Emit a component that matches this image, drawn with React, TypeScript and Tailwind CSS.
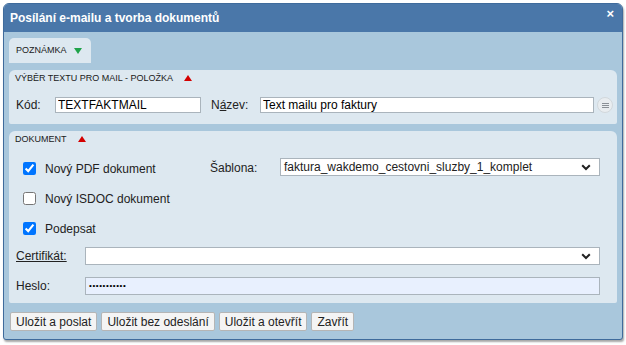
import React from "react";

const font = { fontFamily: '"Liberation Sans", Arial, sans-serif' };

const Chevron = () => (
  <svg width="10" height="7" viewBox="0 0 10 7" className="pointer-events-none">
    <path d="M1.2 1.2 L5 5 L8.8 1.2" fill="none" stroke="#222" strokeWidth="2" />
  </svg>
);

const SectionHead = ({ title }: { title: string }) => (
  <div className="flex items-center h-[17px] pl-[6px] text-[9px] text-[#1a1a1a] uppercase">
    <span>{title}</span>
    <svg width="8" height="6" viewBox="0 0 8 6" className="ml-[11px] mb-[1px]">
      <path d="M0 6 L4 0 L8 6 Z" fill="#d40000" />
    </svg>
  </div>
);

const App = () => {
  return (
    <div className="w-[626px] h-[345px] bg-white pt-[3px] pl-[3px]" style={font}>
      <div className="w-[620px] h-[337px] flex flex-col rounded-t-[6px] rounded-b-[3px] border border-[#3f6b9c] bg-[#a9c7dc] shadow-[1px_2px_2px_rgba(0,0,0,0.35)] overflow-hidden">
        {/* titulek */}
        <div className="h-[28px] shrink-0 bg-[#4a77a9] flex items-center justify-between pl-[6px] pr-[8px]">
          <span className="text-white font-bold text-[12px]">Posílání e-mailu a tvorba dokumentů</span>
          <span className="text-white text-[13px] font-bold leading-none -mt-[10px]">×</span>
        </div>

        <div className="flex flex-col px-[5px]">
          {/* záložka poznámka */}
          <div className="mt-[6px] w-[82px] h-[25px] rounded-t-[5px] bg-[#dde8f0] flex items-center pl-[7px] text-[9px] text-[#1a1a1a]">
            POZNÁMKA
            <svg width="8" height="6" viewBox="0 0 8 6" className="ml-[7px]">
              <path d="M0 0 L8 0 L4 6 Z" fill="#1fa34a" />
            </svg>
          </div>

          {/* výběr textu */}
          <div className="mt-[7px] w-[608px] h-[54px] rounded-t-[6px] rounded-b-[2px] bg-[#dde8f0]">
            <SectionHead title="Výběr textu pro mail - položka" />
            <div className="flex items-center mt-[9px] pl-[7px] text-[12px] text-[#222]">
              <span className="w-[39px]">Kód:</span>
              <input
                readOnly
                value="TEXTFAKTMAIL"
                className="w-[146px] h-[16px] border border-[#aab4bc] bg-white px-[2px] text-[12px] text-black outline-none"
                style={font}
              />
              <span className="ml-[10px] w-[49px]">
                N<u>á</u>zev:
              </span>
              <input
                readOnly
                value="Text mailu pro faktury"
                className="w-[334px] h-[16px] border border-[#aab4bc] bg-white px-[2px] text-[12px] text-black outline-none"
                style={font}
              />
              <div className="ml-[3px] w-[16px] h-[16px] rounded-full bg-[#e9edf0] border border-[#d2d8dc] flex flex-col items-center justify-center gap-[1px]">
                <span className="block w-[7px] h-[1px] bg-[#8a9096]" />
                <span className="block w-[7px] h-[1px] bg-[#8a9096]" />
                <span className="block w-[7px] h-[1px] bg-[#8a9096]" />
              </div>
            </div>
          </div>

          {/* dokument */}
          <div className="mt-[7px] w-[608px] h-[172px] rounded-t-[6px] rounded-b-[2px] bg-[#dde8f0]">
            <SectionHead title="Dokument" />
            <div className="flex mt-[10px]">
              <div className="flex flex-col pl-[14px] gap-[17px] w-[201px] pt-[4px]">
                <label className="flex items-center h-[13px] text-[12px] text-[#222]">
                  <input type="checkbox" defaultChecked className="m-0 w-[13px] h-[13px] accent-[#0075ff]" />
                  <span className="ml-[9px]">Nový PDF dokument</span>
                </label>
                <label className="flex items-center h-[13px] text-[12px] text-[#222]">
                  <input type="checkbox" className="m-0 w-[13px] h-[13px] accent-[#0075ff]" />
                  <span className="ml-[9px]">Nový ISDOC dokument</span>
                </label>
                <label className="flex items-center h-[13px] text-[12px] text-[#222]">
                  <input type="checkbox" defaultChecked className="m-0 w-[13px] h-[13px] accent-[#0075ff]" />
                  <span className="ml-[9px]">Podepsat</span>
                </label>
              </div>
              <div className="flex items-start text-[12px] text-[#222]">
                <span className="w-[70px] mt-[1px]">Šablona:</span>
                <div className="w-[320px] h-[18px] border border-[#aab4bc] bg-white flex items-center justify-between pl-[3px] pr-[8px]">
                  <span>faktura_wakdemo_cestovni_sluzby_1_komplet</span>
                  <Chevron />
                </div>
              </div>
            </div>

            <div className="flex items-center mt-[12px] pl-[7px] text-[12px] text-[#222]">
              <span className="w-[69px] underline">Certifikát:</span>
              <div className="w-[515px] h-[18px] border border-[#aab4bc] bg-white flex items-center justify-end pr-[8px]">
                <Chevron />
              </div>
            </div>
            <div className="flex items-center mt-[12px] pl-[7px] text-[12px] text-[#222]">
              <span className="w-[69px]">Heslo:</span>
              <div className="w-[515px] h-[18px] border border-[#aab4bc] bg-[#e8f0fe] flex items-center pl-[3px] text-[8px] tracking-[0.6px] text-black">
                •••••••••••
              </div>
            </div>
          </div>

          {/* tlačítka */}
          <div className="flex gap-[4px] mt-[9px] pl-[1px]">
            {["Uložit a poslat", "Uložit bez odeslání", "Uložit a otevřít", "Zavřít"].map((t) => (
              <button
                key={t}
                className="h-[19px] px-[5px] border border-[#b5b5b5] rounded-[2px] bg-[#f4f4f4] text-[12px] text-[#222] leading-none"
                style={font}
              >
                {t}
              </button>
            ))}
          </div>
        </div>
      </div>
    </div>
  );
};

export default App;
